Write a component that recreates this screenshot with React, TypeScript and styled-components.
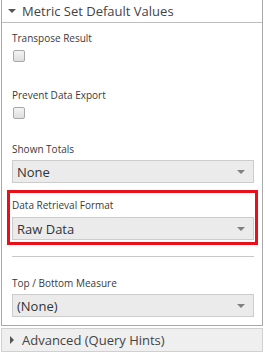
import styled, { createGlobalStyle } from 'styled-components';

const GlobalStyle = createGlobalStyle`
  html, body {
    margin: 0;
    padding: 0;
    background: #ffffff;
  }
  body {
    font-family: "Open Sans", "Noto Sans", sans-serif;
    color: #333333;
  }
`;

const Page = styled.div`
  width: 265px;
  height: 355px;
  padding: 0 2px 0 1px;
  box-sizing: border-box;
  display: flex;
  flex-direction: column;
  gap: 2px;
  overflow: hidden;
`;

const Panel = styled.section`
  border: 1px solid #a9a9a9;
  border-top: none;
  background: #fff;
`;

const PanelHeader = styled.div<{ $closed?: boolean }>`
  height: 22px;
  display: flex;
  align-items: center;
  gap: 6px;
  padding-left: 6px;
  font-size: 13px;
  color: #444;
  background: ${p => (p.$closed ? '#efefef' : '#fff')};
  border-bottom: ${p => (p.$closed ? 'none' : '1px solid #bdbdbd')};
`;

const Caret = styled.span<{ $closed?: boolean }>`
  width: 0;
  height: 0;
  border-style: solid;
  ${p =>
    p.$closed
      ? 'border-width: 4px 0 4px 4px; border-color: transparent transparent transparent #555; margin: 0 2px 0 2px;'
      : 'border-width: 4px 4px 0 4px; border-color: #555 transparent transparent transparent;'}
`;

const Body = styled.div`
  padding: 8px 8px 8px 10px;
  display: flex;
  flex-direction: column;
`;

const Field = styled.div<{ $highlight?: boolean }>`
  display: flex;
  flex-direction: column;
  gap: ${p => (p.$highlight ? '5px' : '4px')};
  padding: ${p => (p.$highlight ? '5px 1px 2px 2px' : '0')};
  margin: ${p => (p.$highlight ? '0 -4px 0 -5px' : '0')};
  border: ${p => (p.$highlight ? '3px solid #e8101a' : 'none')};
`;

const Label = styled.div`
  font-size: 10px;
  line-height: 14px;
  color: #3a3a3a;
`;

const CheckBox = styled.span`
  width: 12px;
  height: 12px;
  margin: 1px 0 0 1px;
  box-sizing: border-box;
  border: 1px solid #a8a8a8;
  border-radius: 2px;
  background: linear-gradient(#f4f4f4, #dedede);
`;

const Select = styled.div`
  height: 23px;
  box-sizing: border-box;
  display: flex;
  align-items: center;
  justify-content: space-between;
  padding: 0 8px 0 4px;
  background: #ebebeb;
  border: 1px solid #cccccc;
  font-size: 13px;
  color: #333;
`;

const SelectArrow = styled.span`
  width: 0;
  height: 0;
  border-style: solid;
  border-width: 4px 4px 0 4px;
  border-color: #808080 transparent transparent transparent;
`;

const Gap = styled.div<{ $h: number }>`
  height: ${p => p.$h}px;
`;

const Rule = styled.hr`
  border: none;
  border-top: 1px solid #c8c8c8;
  margin: 0;
`;

const AdvancedBox = styled.section`
  border: 1px solid #d0d0d0;
`;

export default function App() {
  return (
    <>
      <GlobalStyle />
      <Page>
        <Panel>
          <PanelHeader>
            <Caret />
            Metric Set Default Values
          </PanelHeader>
          <Body>
            <Field>
              <Label>Transpose Result</Label>
              <CheckBox />
            </Field>
            <Gap $h={26} />
            <Field>
              <Label>Prevent Data Export</Label>
              <CheckBox />
            </Field>
            <Gap $h={23} />
            <Field>
              <Label>Shown Totals</Label>
              <Select>
                None
                <SelectArrow />
              </Select>
            </Field>
            <Gap $h={7} />
            <Field $highlight>
              <Label>Data Retrieval Format</Label>
              <Select>
                Raw Data
                <SelectArrow />
              </Select>
            </Field>
            <Gap $h={11} />
            <Rule />
            <Gap $h={19} />
            <Field>
              <Label>Top / Bottom Measure</Label>
              <Select>
                (None)
                <SelectArrow />
              </Select>
            </Field>
          </Body>
        </Panel>
        <AdvancedBox>
          <PanelHeader $closed>
            <Caret $closed />
            Advanced (Query Hints)
          </PanelHeader>
        </AdvancedBox>
      </Page>
    </>
  );
}
